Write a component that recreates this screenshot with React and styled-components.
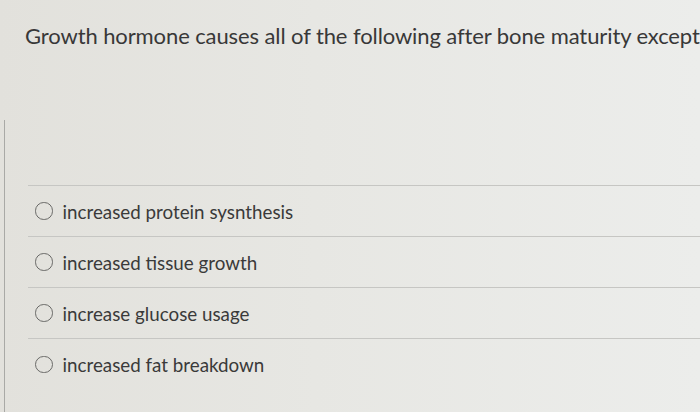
import React from 'react';
import styled, { createGlobalStyle } from 'styled-components';

const GlobalStyle = createGlobalStyle`
  html, body {
    margin: 0;
    padding: 0;
  }
  body {
    width: 700px;
    height: 412px;
    overflow: hidden;
    font-family: Lato, "Open Sans", sans-serif;
    background: linear-gradient(90deg, #e2e1dc 0%, #e7e7e3 45%, #ecedeb 100%);
  }
`;

const options = [
  'increased protein sysnthesis',
  'increased tissue growth',
  'increase glucose usage',
  'increased fat breakdown',
];

const App = () => {
  return (
    <Page>
      <GlobalStyle />
      <Question>
        Growth hormone causes all of the following after bone maturity except
      </Question>
      <Body>
        <Answers>
          {options.map((text) => (
            <Option key={text}>
              <Radio />
              <Label>{text}</Label>
            </Option>
          ))}
        </Answers>
      </Body>
    </Page>
  );
};

const Page = styled.main`
  display: flex;
  flex-direction: column;
  height: 412px;
`;

const Question = styled.h1`
  margin: 0;
  padding: 22px 0 0 25px;
  height: 120px;
  box-sizing: border-box;
  font-size: 22px;
  font-weight: 400;
  color: #383838;
  white-space: nowrap;
  letter-spacing: -0.1px;
`;

const Body = styled.section`
  flex: 1;
  margin-left: 4px;
  border-left: 1.5px solid #a9a9a6;
  padding-top: 65px;
`;

const Answers = styled.ul`
  list-style: none;
  margin: 0 0 0 23px;
  padding: 0;
  border-top: 1px solid #c6c6c3;
`;

const Option = styled.li`
  display: flex;
  align-items: center;
  gap: 10px;
  height: 51px;
  padding-left: 7px;
  border-bottom: 1px solid #c6c6c3;
  box-sizing: border-box;
  &:last-child {
    border-bottom: none;
  }
`;

const Radio = styled.span`
  width: 15.5px;
  height: 15.5px;
  border: 1.6px solid #6a6a68;
  border-radius: 50%;
  flex-shrink: 0;
`;

const Label = styled.span`
  font-size: 18.8px;
  color: #3a3a3a;
`;

export default App;
